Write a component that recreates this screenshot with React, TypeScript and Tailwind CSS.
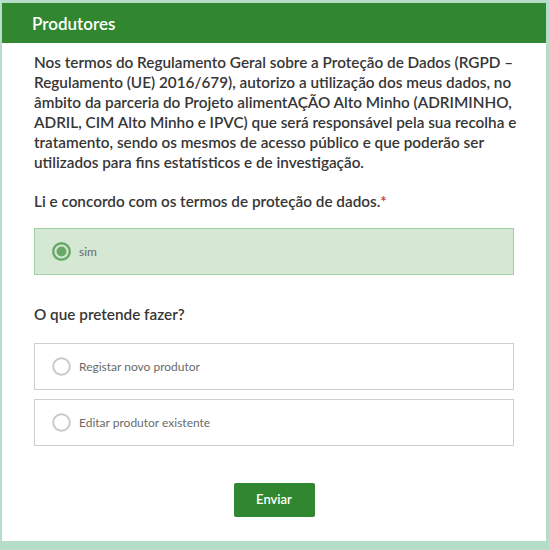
import React from "react";

const font = { fontFamily: '"Lato", "Noto Sans", sans-serif' };

function Radio({ checked }: { checked?: boolean }) {
  return checked ? (
    <svg width="19" height="19" viewBox="0 0 19 19" className="shrink-0">
      <circle cx="9.5" cy="9.5" r="8.2" fill="none" stroke="#69a967" strokeWidth="2.4" />
      <circle cx="9.5" cy="9.5" r="5" fill="#69a967" />
    </svg>
  ) : (
    <svg width="19" height="19" viewBox="0 0 19 19" className="shrink-0">
      <circle cx="9.5" cy="9.5" r="8.3" fill="#fff" stroke="#c9c9c9" strokeWidth="2" />
    </svg>
  );
}

export default function App() {
  return (
    <div className="min-h-[550px] w-[549px] bg-[#b6ddc8] pt-[3px] pl-[2px] pr-[3px] pb-[9px]" style={font}>
      <div className="bg-white w-[544px] h-[538px] flex flex-col">
        <div className="h-[40px] bg-[#31872f] flex items-center pl-[30px]">
          <span className="text-white text-[17px] font-semibold leading-none">Produtores</span>
        </div>
        <div className="px-[32px] flex flex-col">
          <p className="mt-[9px] text-[15.3px] leading-[20px] font-semibold text-[#363636] w-[500px] whitespace-nowrap">
            Nos termos do Regulamento Geral sobre a Proteção de Dados (RGPD –<br />
            Regulamento (UE) 2016/679), autorizo a utilização dos meus dados, no<br />
            âmbito da parceria do Projeto alimentAÇÃO Alto Minho (ADRIMINHO,<br />
            ADRIL, CIM Alto Minho e IPVC) que será responsável pela sua recolha e<br />
            tratamento, sendo os mesmos de acesso público e que poderão ser<br />
            utilizados para fins estatísticos e de investigação.
          </p>
          <div className="mt-[19px] text-[15.3px] leading-[20px] font-semibold text-[#363636]">
            Li e concordo com os termos de proteção de dados.<span className="text-[#c8322a]">*</span>
          </div>
          <div className="mt-[17px] h-[47px] w-[480px] border border-[#a3d0a1] bg-[#d4e8d4] flex items-center pl-[17px] gap-[8px]">
            <Radio checked />
            <span className="text-[12px] text-[#6a6a6a]">sim</span>
          </div>
          <div className="mt-[29px] text-[15.3px] leading-[20px] font-semibold text-[#363636]">
            O que pretende fazer?
          </div>
          <div className="mt-[19px] flex flex-col gap-[9px]">
            <div className="h-[47px] w-[480px] border border-[#cfcfcf] flex items-center pl-[17px] gap-[8px]">
              <Radio />
              <span className="text-[12px] text-[#6a6a6a]">Registar novo produtor</span>
            </div>
            <div className="h-[47px] w-[480px] border border-[#cfcfcf] flex items-center pl-[17px] gap-[8px]">
              <Radio />
              <span className="text-[12px] text-[#6a6a6a]">Editar produtor existente</span>
            </div>
          </div>
          <div className="mt-[37px] flex justify-center">
            <button className="w-[81px] h-[34px] bg-[#31872f] rounded-[2px] text-white text-[13px] font-semibold">
              Enviar
            </button>
          </div>
        </div>
      </div>
    </div>
  );
}
